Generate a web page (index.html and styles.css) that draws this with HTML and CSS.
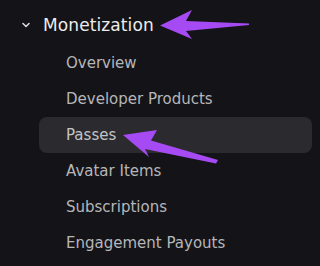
FILE: index.html
```html
<!DOCTYPE html>
<html>
<head>
<meta charset="utf-8">
<link rel="stylesheet" href="styles.css">
</head>
<body>
<nav class="sidebar">
  <div class="group-header">
    <svg class="chevron" width="10" height="8" viewBox="0 0 10 8"><path d="M2 2.5 L5 5.5 L8 2.5" fill="none" stroke="#d8d8d8" stroke-width="1.6" stroke-linecap="round" stroke-linejoin="round"/></svg>
    <span class="group-title">Monetization</span>
  </div>
  <ul class="items">
    <li class="item">Overview</li>
    <li class="item">Developer Products</li>
    <li class="item active">Passes</li>
    <li class="item">Avatar Items</li>
    <li class="item">Subscriptions</li>
    <li class="item">Engagement Payouts</li>
  </ul>
</nav>
<svg class="annotations" width="320" height="266" viewBox="0 0 320 266">
  <polygon points="160,25.5 192,10 186,21 249,23.5 249,25 186,31 192,39" fill="#a64bf4"/>
  <polygon points="123,135 157,130 151,140.5 218,160 216,163.5 145,149 149,157" fill="#a64bf4"/>
</svg>
</body>
</html>
```
FILE: styles.css
```css
html, body {
  margin: 0;
  padding: 0;
  background: #141418;
  width: 320px;
  height: 266px;
  overflow: hidden;
}
body {
  position: relative;
  font-family: "DejaVu Sans", "Noto Sans", sans-serif;
}
.sidebar {
  display: flex;
  flex-direction: column;
}
.group-header {
  display: flex;
  align-items: center;
  height: 36px;
  margin-top: 7px;
  margin-bottom: 2px;
  padding-left: 21px;
}
.chevron {
  display: block;
  margin-right: 12px;
}
.group-title {
  color: #ececec;
  font-size: 17px;
  letter-spacing: 0.1px;
}
.items {
  list-style: none;
  margin: 0 8px 0 39px;
  padding: 0;
}
.item {
  height: 36px;
  display: flex;
  align-items: center;
  padding-left: 27px;
  color: #b6b6b8;
  font-size: 15px;
  border-radius: 8px;
}
.item.active {
  background: #2b2b2f;
  color: #c4c4c6;
}
.annotations {
  position: absolute;
  left: 0;
  top: 0;
}
```
